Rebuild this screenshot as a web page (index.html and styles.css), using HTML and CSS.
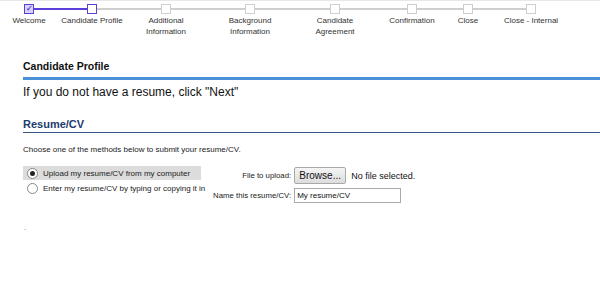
FILE: index.html
```html
<!DOCTYPE html>
<html lang="en">
<head>
    <meta charset="UTF-8">
    <title>Candidate Profile</title>
    <link rel="stylesheet" href="styles.css">
</head>
<body>
    <div class="steps">
        <div class="step done">
            <div class="step-mark"><span class="box">&#10003;</span></div>
            <div class="step-label">Welcome</div>
        </div>
        <div class="step current">
            <div class="step-mark"><span class="box"></span></div>
            <div class="step-label">Candidate Profile</div>
        </div>
        <div class="step">
            <div class="step-mark"><span class="box"></span></div>
            <div class="step-label">Additional<br>Information</div>
        </div>
        <div class="step">
            <div class="step-mark"><span class="box"></span></div>
            <div class="step-label">Background<br>Information</div>
        </div>
        <div class="step">
            <div class="step-mark"><span class="box"></span></div>
            <div class="step-label">Candidate<br>Agreement</div>
        </div>
        <div class="step">
            <div class="step-mark"><span class="box"></span></div>
            <div class="step-label">Confirmation</div>
        </div>
        <div class="step">
            <div class="step-mark"><span class="box"></span></div>
            <div class="step-label">Close</div>
        </div>
        <div class="step">
            <div class="step-mark"><span class="box"></span></div>
            <div class="step-label">Close - Internal</div>
        </div>
    </div>

    <div class="content">
        <h2 class="page-title">Candidate Profile</h2>
        <p class="notice">If you do not have a resume, click "Next"</p>

        <h3 class="section-title">Resume/CV</h3>
        <p class="hint">Choose one of the methods below to submit your resume/CV.</p>

        <div class="resume-form">
            <div class="methods">
                <label class="method selected">
                    <span class="radio checked"></span>
                    Upload my resume/CV from my computer
                </label>
                <label class="method">
                    <span class="radio"></span>
                    Enter my resume/CV by typing or copying it in
                </label>
            </div>
            <div class="fields">
                <span class="field-label">File to upload:</span>
                <div class="file-row">
                    <button class="browse-btn">Browse...</button>
                    <span class="file-status">No file selected.</span>
                </div>
                <span class="field-label">Name this resume/CV:</span>
                <input type="text" class="name-input" value="My resume/CV">
            </div>
        </div>

        <div class="dot">.</div>
    </div>
</body>
</html>
```

FILE: styles.css
```css
body {
    margin: 0;
    font-family: "Liberation Sans", Arial, sans-serif;
    background-color: #ffffff;
    color: #222;
    border-top: 1px solid #e8e8e8;
}

/* progress steps */
.steps {
    display: grid;
    grid-template-columns: 58px 68px 80px 88px 82px 72px 40px 86px;
    padding-top: 3px;
}
.step-mark {
    display: flex;
    align-items: center;
    height: 10px;
}
.step-mark::before,
.step-mark::after {
    content: "";
    flex: 1;
    height: 2px;
    background-color: #cfcfcf;
}
.step:first-child .step-mark::before,
.step:last-child .step-mark::after {
    visibility: hidden;
}
.step.done .step-mark::after,
.step.current .step-mark::before {
    background-color: #5b3fd8;
}
.box {
    width: 8px;
    height: 8px;
    border: 1px solid #cfcfcf;
    background-color: #fff;
    font-size: 8px;
    line-height: 8px;
    text-align: center;
    color: #5b3fd8;
    font-weight: bold;
}
.step.done .box {
    border-color: #5b3fd8;
    background-color: #d9d2fa;
}
.step.current .box {
    border-color: #5b3fd8;
    border-width: 1.5px;
}
.step-label {
    text-align: center;
    font-size: 8px;
    line-height: 11px;
    margin-top: 1px;
    color: #333;
}

/* main content */
.content {
    padding: 0 0 0 23px;
}
.page-title {
    font-size: 10.5px;
    line-height: 12px;
    font-weight: bold;
    margin: 23px 0 0;
    padding-bottom: 5px;
    border-bottom: 3px solid #4a90d9;
    color: #111;
}
.notice {
    font-size: 12px;
    line-height: 14px;
    margin: 5px 0 0;
    color: #111;
}
.section-title {
    font-size: 11px;
    line-height: 13px;
    font-weight: bold;
    color: #1d3c6e;
    margin: 19px 0 0;
    padding-bottom: 1px;
    border-bottom: 1px solid #3c5a86;
}
.hint {
    font-size: 8px;
    line-height: 10px;
    margin: 12px 0 0;
    color: #222;
}

.resume-form {
    display: flex;
    gap: 12px;
    margin-top: 11px;
    font-size: 8px;
}
.methods {
    width: 178px;
}
.method {
    display: flex;
    align-items: center;
    gap: 5px;
    height: 14px;
    padding-left: 4px;
    margin-bottom: 1px;
    white-space: nowrap;
    color: #222;
}
.method.selected {
    background-color: #dcdcdc;
}
.radio {
    flex-shrink: 0;
    width: 9px;
    height: 9px;
    border: 1px solid #888;
    border-radius: 50%;
    background-color: #fff;
    display: flex;
    align-items: center;
    justify-content: center;
}
.radio.checked::after {
    content: "";
    width: 5px;
    height: 5px;
    border-radius: 50%;
    background-color: #222;
}

.fields {
    display: grid;
    grid-template-columns: auto auto;
    column-gap: 3px;
    row-gap: 4px;
    align-items: center;
    margin-top: 1px;
}
.field-label {
    text-align: right;
    white-space: nowrap;
    font-size: 7.8px;
    color: #222;
}
.file-row {
    display: flex;
    align-items: center;
    gap: 5px;
}
.browse-btn {
    font-family: "Liberation Sans", Arial, sans-serif;
    font-size: 10px;
    height: 17px;
    width: 52px;
    padding: 0;
    border: 1px solid #a9a9a9;
    border-radius: 2px;
    background: linear-gradient(#f5f5f5, #dcdcdc);
    color: #111;
}
.file-status {
    font-family: "Liberation Sans", Arial, sans-serif;
    font-size: 9px;
    color: #111;
}
.name-input {
    width: 107px;
    height: 15px;
    box-sizing: border-box;
    border: 1px solid #aaa;
    padding: 0 2px;
    font-family: "Liberation Sans", Arial, sans-serif;
    font-size: 8px;
    color: #111;
}
.dot {
    font-size: 8px;
    margin-top: 20px;
    padding-left: 1px;
    color: #666;
}
```
